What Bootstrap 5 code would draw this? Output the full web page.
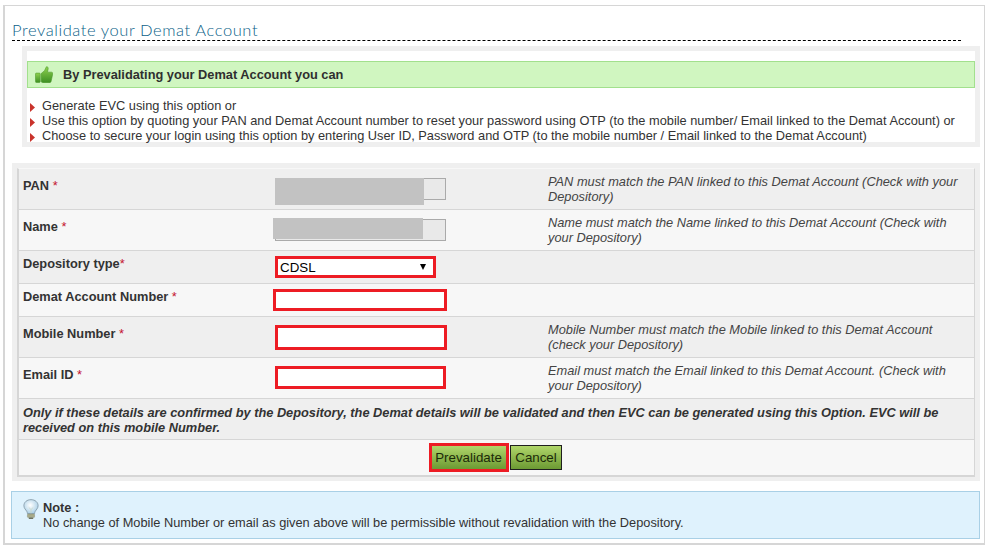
<!DOCTYPE html>
<html lang="en">
<head>
<meta charset="utf-8">
<title>Prevalidate your Demat Account</title>
<link href="https://cdn.jsdelivr.net/npm/bootstrap@5.3.0/dist/css/bootstrap.min.css" rel="stylesheet">
<style>
html,body{background:#fff;margin:0;height:553px;overflow:hidden}
body{font-family:"Liberation Sans",Arial,sans-serif;font-size:12.8px;line-height:15px;color:#333}
.shell{margin:5px 0 0 3px;width:982px;height:540px;border:1px solid #d6d6d6;border-width:1px 1px 2px 2px;background:#fff;padding:13px 3px 0 6px}
.page-title{font-family:"Lato",sans-serif;font-weight:300;font-size:16.5px;line-height:23px;letter-spacing:.58px;color:#0b5f88;margin:0 20px 0 1px;border-bottom:1px dashed #000;height:22px}
.intro{margin:5px 0 0 11px;width:958px;height:101px;border:5px solid #efefef;background:#fff;padding-top:10px}
.benefit{height:27px;background:#d0f6c0;border:1px solid #a2e08d;display:flex;align-items:center;font-weight:700;color:#2f2f2f;padding:0 0 1px 7px}
.benefit svg{margin-right:10px}
.points{list-style:none;margin:10px 0 0;padding:0;color:#333}
.points li{height:15px;padding-left:15px;position:relative;white-space:nowrap}
.points li svg{position:absolute;left:3px;top:5px}
.form-wrap{margin:16px 0 0 1px;width:968px;height:318px;background:#efefef;padding:5px}
.form-table{height:309px;background:#efefef;border-top:1px solid #f7f7f7;border-left:2px solid #d6d6d6;border-right:1px solid #d6d6d6;border-bottom:2px solid #d6d6d6}
.frow{display:flex;border-bottom:1px solid #d6d6d6;background:#efefef;position:relative}
.frow.alt{background:#f7f7f7}
.r41{height:41px}.r33{height:33px}
.lab{width:256px;padding:9px 0 0 4px;font-weight:700;color:#333;flex:none}
.r33 .lab{padding-top:5px}
.star{color:#c4122f;font-weight:400}
.ctl{width:273px;flex:none}
.hint{font-style:italic;color:#444;padding-top:5px;padding-right:4px;flex:1 1 auto}
.bx{display:block;background:#fff;border:3px solid #ed1c24;border-radius:0;padding:0;height:22px;outline:0}
.ro{display:block;background:#e9e9e9;border:1px solid #aaa;width:171px;height:22px;margin:9px 0 0}
.redact{position:absolute;background:#c2c2c2}
.redact-a{left:256px;top:9px;width:149px;height:27px}
.redact-b{left:254px;top:8px;width:150px;height:21px}
.pick{width:161px;height:22px;margin:5px 0 0;font:13.33px "Liberation Sans",Arial,sans-serif;color:#000;display:flex;align-items:center;justify-content:space-between;padding:0 7px 0 2px}
.pick i{width:0;height:0;border-left:3.5px solid transparent;border-right:3.5px solid transparent;border-top:6px solid #000}
.in-demat{width:174px;margin:5px 0 0 -2px}
.in-mobile{width:172px;height:25px;margin:8px 0 0}
.in-email{width:171px;height:23px;margin:8px 0 0}
.confirm{font-weight:700;font-style:italic;color:#333;padding:6px 4px 0;height:41px;border-bottom:1px solid #d6d6d6;background:#efefef}
.actions{height:35px;background:#f7f7f7;display:flex;justify-content:center;align-items:flex-start;padding:3px 2px 0 0}
.act{font:13.33px/1 "Liberation Sans",Arial,sans-serif;color:#1c2a08;border:1px solid #1f1f1f;border-radius:0;background:linear-gradient(#b0d66a,#6c9a33);padding:0;height:25px}
.act.main{width:80px;height:29px;border:3px solid #ed1c24;margin-right:1px;padding-right:1px}
.act.off{width:52px;margin-top:2px}
.note{margin:10px 0 0;width:969px;height:48px;background:#dff2fd;border:1px solid #a9d0e6;display:flex;padding:8px 0 0 11px;color:#333}
.note svg{margin:-1px 4px 0 0;flex:none}
.note b{font-weight:700}
</style>
</head>
<body>
<div class="shell">
  <h1 class="page-title">Prevalidate your Demat Account</h1>
  <div class="intro">
    <div class="benefit">
      <svg class="thumb" width="18" height="17" viewBox="0 0 19 18" preserveAspectRatio="none" aria-hidden="true"><defs><linearGradient id="g" x1="0" y1="0" x2="0" y2="1"><stop offset="0" stop-color="#8fd14f"/><stop offset="1" stop-color="#3c8f22"/></linearGradient></defs><rect x="0.5" y="7.5" width="5" height="10" rx="1" fill="url(#g)" stroke="#4d9a2c" stroke-width=".6"/><path d="M6.500 8 10 5 12 .8c1.300-.4 2.200.8 1.900 2.300L13.200 6.500h4.100c1.200 0 1.700 1 1.400 2L17 16.300c-.3 1-1 1.400-2 1.400H8.500c-1 0-2-.5-2-1.500z" fill="url(#g)" stroke="#4d9a2c" stroke-width=".6"/></svg>
      By Prevalidating your Demat Account you can
    </div>
    <ul class="points">
      <li><svg width="5" height="9" viewBox="0 0 5 9" aria-hidden="true"><path d="M0 0 5 4.500 0 9z" fill="#c9332b"/></svg>Generate EVC using this option or</li>
      <li><svg width="5" height="9" viewBox="0 0 5 9" aria-hidden="true"><path d="M0 0 5 4.500 0 9z" fill="#c9332b"/></svg>Use this option by quoting your PAN and Demat Account number to reset your password using OTP (to the mobile number/ Email linked to the Demat Account) or</li>
      <li><svg width="5" height="9" viewBox="0 0 5 9" aria-hidden="true"><path d="M0 0 5 4.500 0 9z" fill="#c9332b"/></svg>Choose to secure your login using this option by entering User ID, Password and OTP (to the mobile number / Email linked to the Demat Account)</li>
    </ul>
  </div>
  <div class="form-wrap">
    <div class="form-table">
      <div class="frow r41">
        <div class="lab">PAN <span class="star">*</span></div>
        <div class="ctl"><span class="ro"></span></div>
        <div class="hint">PAN must match the PAN linked to this Demat Account (Check with your Depository)</div>
        <span class="redact redact-a"></span>
      </div>
      <div class="frow alt r41">
        <div class="lab">Name <span class="star">*</span></div>
        <div class="ctl"><span class="ro"></span></div>
        <div class="hint">Name must match the Name linked to this Demat Account (Check with your Depository)</div>
        <span class="redact redact-b"></span>
      </div>
      <div class="frow r33">
        <div class="lab">Depository type<span class="star">*</span></div>
        <div class="ctl"><div class="bx pick">CDSL<i></i></div></div>
        <div class="hint"></div>
      </div>
      <div class="frow alt r33">
        <div class="lab">Demat Account Number <span class="star">*</span></div>
        <div class="ctl"><input class="bx in-demat" type="text" aria-label="Demat Account Number"></div>
        <div class="hint"></div>
      </div>
      <div class="frow r41">
        <div class="lab">Mobile Number <span class="star">*</span></div>
        <div class="ctl"><input class="bx in-mobile" type="text" aria-label="Mobile Number"></div>
        <div class="hint">Mobile Number must match the Mobile linked to this Demat Account (check your Depository)</div>
      </div>
      <div class="frow alt r41">
        <div class="lab">Email ID <span class="star">*</span></div>
        <div class="ctl"><input class="bx in-email" type="text" aria-label="Email ID"></div>
        <div class="hint">Email must match the Email linked to this Demat Account. (Check with your Depository)</div>
      </div>
      <div class="confirm">Only if these details are confirmed by the Depository, the Demat details will be validated and then EVC can be generated using this Option. EVC will be received on this mobile Number.</div>
      <div class="actions">
        <button type="button" class="act main">Prevalidate</button>
        <button type="button" class="act off">Cancel</button>
      </div>
    </div>
  </div>
  <div class="note">
    <svg width="16" height="21" viewBox="0 0 18 26" preserveAspectRatio="none" aria-hidden="true"><defs><radialGradient id="b" cx=".45" cy=".4" r=".6"><stop offset="0" stop-color="#fff"/><stop offset="1" stop-color="#a9cfe6"/></radialGradient></defs><path d="M9 .8C4.200.8 1 4.200 1 8.200c0 3.300 2.100 5 3.200 7 .5 1 .7 2 .8 3h8c.1-1 .3-2 .8-3 1.100-2 3.200-3.700 3.200-7C17 4.200 13.800.8 9 .8z" fill="url(#b)" stroke="#7b8f9c" stroke-width=".9"/><path d="M6.500 10.500 9 13l2.500-2.500M9 13v5" fill="none" stroke="#c9d6c0" stroke-width=".8"/><rect x="5" y="18.500" width="8" height="4.500" rx="1" fill="#a8ab8a" stroke="#7e8268" stroke-width=".5"/><rect x="6.500" y="23" width="5" height="1.800" rx=".8" fill="#6f7360"/></svg>
    <div><b>Note :</b><br>No change of Mobile Number or email as given above will be permissible without revalidation with the Depository.</div>
  </div>
</div>
</body>
</html>
